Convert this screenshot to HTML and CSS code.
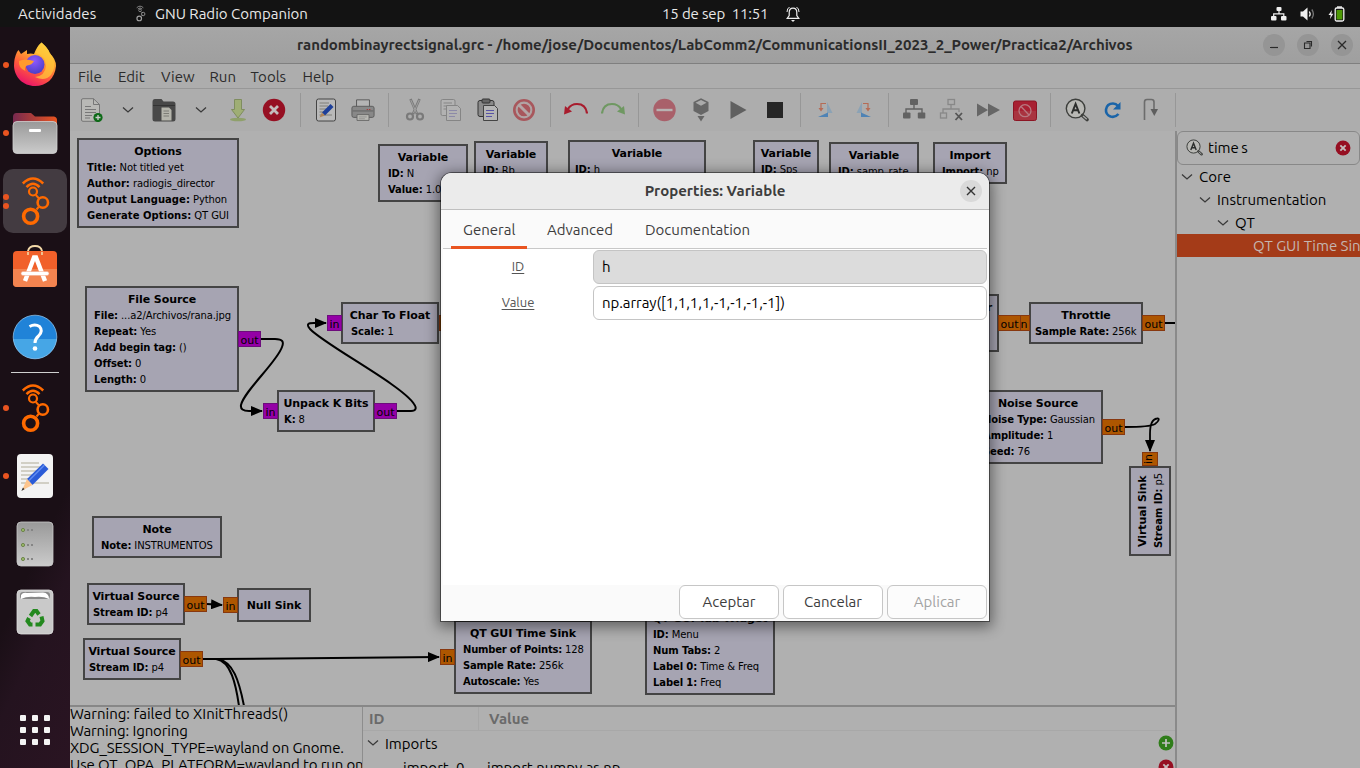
FILE: index.html
```
<!DOCTYPE html>
<html lang="es">
<head>
<meta charset="utf-8">
<title>GNU Radio Companion</title>
<link rel="stylesheet" href="styles.css">
</head>
<body>
<svg class="defs" width="0" height="0">
  <defs>
    <linearGradient id="gFox" x1="0.8" y1="0" x2="0.3" y2="1"><stop offset="0" stop-color="#fff44f"/><stop offset=".35" stop-color="#ffa930"/><stop offset=".65" stop-color="#ff5a3c"/><stop offset="1" stop-color="#e8106c"/></linearGradient>
    <radialGradient id="gGlobe" cx=".45" cy=".3" r=".7"><stop offset="0" stop-color="#9059ff"/><stop offset="1" stop-color="#4b3fc6"/></radialGradient>
    <linearGradient id="gFolder" x1="0" y1="0" x2="1" y2="0"><stop offset="0" stop-color="#77294f"/><stop offset="1" stop-color="#e95420"/></linearGradient>
    <linearGradient id="gGrey" x1="0" y1="0" x2="0" y2="1"><stop offset="0" stop-color="#999"/><stop offset="1" stop-color="#cbcbcb"/></linearGradient>
    <symbol id="gnuradio" viewBox="0 0 64 64">
      <g fill="none" stroke="currentColor">
        <path d="M19.800 14.500Q30 4.500 40.200 14.500" stroke-width="2.500"/>
        <path d="M23.500 18.200Q30 11.500 36.500 18.200" stroke-width="2.500"/>
        <circle cx="30" cy="22.500" r="4" stroke-width="2.200"/>
        <path d="M32.800 26L36.500 30M36.500 37L33.500 40.500" stroke-width="2"/>
        <circle cx="39.800" cy="33.500" r="5.200" stroke-width="2.600"/>
        <circle cx="27.600" cy="47.200" r="7" stroke-width="3.600"/>
      </g>
    </symbol>
    <symbol id="chev" viewBox="0 0 12 8"><path d="M1 1.500L6 6L11 1.500" fill="none" stroke="#3a3a3a" stroke-width="1.300"/></symbol>
    <symbol id="find" viewBox="0 0 24 24">
      <circle cx="10.600" cy="10.600" r="9.300" fill="#b8b8b4" stroke="#3d3f3c" stroke-width="1.400"/>
      <path d="M17.500 17.500L22 21.500" stroke="#3d3f3c" stroke-width="3.600" stroke-linecap="round"/><path d="M18 18L21.800 21.300" stroke="#aaa" stroke-width="1.400"/>
      <path d="M6.800 15.500L10.600 6L14.400 15.500M8.300 12.300H13" fill="none" stroke="#2c2e2c" stroke-width="2"/>
    </symbol>
    <symbol id="redx" viewBox="0 0 24 24"><circle cx="12" cy="12" r="11.200" fill="#960f22"/><path d="M8 8L16 16M16 8L8 16" stroke="#c3bcbc" stroke-width="2.800"/></symbol>
    <marker id="arr" viewBox="0 0 12 10" refX="11" refY="5" markerWidth="12" markerHeight="10" markerUnits="userSpaceOnUse" orient="auto"><path d="M0 0L12 5L0 10Z"/></marker>
  </defs>
</svg>
<div class="desktop">
  <header class="topbar">
    <span class="activities">Actividades</span>
    <svg class="app-glyph" viewBox="15 6 36 52"><use href="#gnuradio" width="64" height="64"/></svg>
    <span class="app-name">GNU Radio Companion</span>
    <span class="clock">15 de sep&nbsp; 11:51</span>
    <svg class="bell" viewBox="0 0 14 16"><g fill="none" stroke="#eee" stroke-width="1.200"><path d="M1.200 12.300H12.800L10.800 9.500V6.500Q10.800 2.200 7 2.200Q3.200 2.200 3.200 6.500V9.500Z"/><path d="M1 6Q1 2.500 3.500 1M13 6Q13 2.500 10.500 1" stroke-width="1"/></g><path d="M5 14H9L7 16Z" fill="#eee"/></svg>
    <div class="tray">
      <svg width="16" height="14" viewBox="0 0 16 14"><g fill="#f0f0f0"><rect x="5.500" y="0" width="5" height="4" rx="1"/><rect x="0" y="9" width="5.500" height="4.500" rx="1"/><rect x="10" y="9" width="5.500" height="4.500" rx="1"/></g><path d="M8 4V7M2.700 9.500V6.800H12.800V9.500" fill="none" stroke="#f0f0f0" stroke-width="1.200"/></svg>
      <svg width="16" height="14" viewBox="0 0 16 14"><path d="M0.500 4.500H3L7.500 0.500V13.500L3 9.500H.5Z" fill="#f0f0f0"/><path d="M9.300 4.500Q11 7 9.300 9.500" fill="none" stroke="#f0f0f0" stroke-width="1.300"/><path d="M11.800 2.500Q15 7 11.800 11.500" fill="none" stroke="#777" stroke-width="1.300"/></svg>
      <svg width="17" height="16" viewBox="0 0 17 16"><path d="M4 4L0.500 9H2.700L2 13L5.300 7.700H3.300Z" fill="#f0f0f0"/><rect x="7.200" y="2" width="8.600" height="13" rx="1.500" fill="none" stroke="#f0f0f0" stroke-width="1.300"/><rect x="9" y="0.300" width="5" height="1.500" fill="#f0f0f0"/><rect x="8.600" y="4" width="5.800" height="9.500" fill="#4e9a06"/></svg>
    </div>
  </header>
  <div class="body">
    <nav class="dock">
      <div class="app"><i class="dot"></i><svg viewBox="0 0 64 64">
        <path d="M38.500 9.500Q46 16 46.500 20Q53 26 53 33C52 46 43 53 32 53C20 53 11.500 44 11 33Q11 25 14 19L15.500 17L18 21L24 17L24 21Q28 20 31 21Q34 13 38.500 9.500Z" fill="url(#gFox)"/>
        <circle cx="32" cy="31.500" r="9.500" fill="url(#gGlobe)"/>
        <path d="M16 28Q22 25 31 28Q29 32 24 32.500Q21 34 22.500 38Q15 35 16 28Z" fill="#ff9a2e"/>
        <path d="M38.500 9.500Q34 14 33 20Q43 23 43 33Q42 43 32 44Q42 49 48 42Q53 35 50 26Q46 16 38.500 9.500Z" fill="#ffc63a" opacity=".75"/></svg></div>
      <div class="app"><i class="dot"></i><svg viewBox="0 0 64 64">
        <path d="M10 25V16Q10 12 13.500 12H28L32 15.500H51Q54 16 54 19V28H10Z" fill="url(#gFolder)"/>
        <rect x="10" y="20.500" width="44" height="32" rx="4" fill="url(#gGrey)" stroke="#d0d0d0" stroke-width=".8"/><rect x="26" y="28" width="12" height="3" rx="1" fill="#fff"/></svg></div>
      <div class="app active"><i class="dot d1"></i><i class="dot d2"></i><svg class="gr" viewBox="0 0 64 64"><use href="#gnuradio" width="64" height="64"/></svg></div>
      <div class="app"><svg viewBox="0 0 64 64">
        <path d="M25 20V14Q26 9 32 9Q38 9 39 14V20" fill="none" stroke="#f3d9a8" stroke-width="1.800"/>
        <rect x="10" y="14" width="44" height="36" rx="4" fill="#f1602a"/><path d="M10 32H54V46Q54 50 50 50H14Q10 50 10 46Z" fill="#f38450"/>
        <path d="M25 18V15M39 18V15" stroke="#f3d9a8" stroke-width="1.600"/>
        <path d="M22 44L31 20.500H33L42 44" fill="none" stroke="#fff" stroke-width="4.400"/><rect x="18" y="34.500" width="28" height="4" rx="2" fill="#fff" stroke="#f0a080" stroke-width=".5"/></svg></div>
      <div class="app"><svg viewBox="0 0 64 64">
        <circle cx="32" cy="32" r="21.800" fill="#2083d8"/><path d="M10.300 34H53.700A21.800 21.800 0 0 1 10.300 34Z" fill="#46a6e6"/><circle cx="32" cy="32" r="21.800" fill="none" stroke="#9bcdf2" stroke-width=".7"/>
        <path d="M26.500 21.500Q32 18.500 36.500 21.500Q40.500 26 35.500 31Q32 34 32 38" fill="none" stroke="#fff" stroke-width="3"/><circle cx="32" cy="43.500" r="2.300" fill="#fff"/></svg></div>
      <hr class="dock-sep">
      <div class="app"><i class="dot"></i><svg class="gr" viewBox="0 0 64 64"><use href="#gnuradio" width="64" height="64"/></svg></div>
      <div class="app"><i class="dot"></i><svg viewBox="0 0 64 64">
        <rect x="14" y="10" width="36" height="44" rx="4" fill="#f3f3f3"/><path d="M18 19H36M18 23H41M18 27H38M18 31H34M18 35H30M18 39H46" stroke="#c6c3b6" stroke-width="1.700"/>
        <path d="M24 35L40 19.500L45.500 25L29.500 41Z" fill="#2a5bd7"/><path d="M26 36.500L41.500 21" stroke="#5f8bf0" stroke-width="1.600"/><path d="M24 35L29.500 41L19 46.500Z" fill="#fdc58e"/><path d="M20 43.500L21.500 45.300L18.300 47Z" fill="#333"/></svg></div>
      <div class="app"><svg viewBox="0 0 64 64">
        <rect x="14" y="10" width="36" height="44" rx="4" fill="url(#gGrey)" stroke="#c9c9c9" stroke-width=".8"/>
        <g fill="#9ab86a" stroke="#5f7a3a" stroke-width=".8"><circle cx="20" cy="18" r="1.600"/><circle cx="20" cy="33" r="1.600"/><circle cx="20" cy="47" r="1.600"/></g>
        <path d="M24 18H30M24 33H30M24 47H30" stroke="#858585" stroke-width="2" stroke-dasharray="2 2"/></svg></div>
      <div class="app"><svg viewBox="0 0 64 64">
        <rect x="14" y="10" width="36" height="44" rx="4" fill="#c9c9c9" stroke="#dedede" stroke-width=".8"/><rect x="17" y="12" width="30" height="7" rx="3" fill="#888"/><path d="M18 19V15Q20 12 24 13L40 12.500Q46 13 46 19Q40 16 32 17Q24 16 18 19Z" fill="#fff"/>
        <g fill="none" stroke="#23891f" stroke-width="4"><path d="M27.500 36L31 31H33.500L36 34.500"/><path d="M38.500 36.500L39.500 41L37 44.500H32.500"/><path d="M29.500 44.500H27L24.500 41L26 38"/></g></svg></div>
      <div class="app grid"><svg viewBox="0 0 64 64"><g fill="#f4f4f4"><rect x="17" y="17" width="6" height="6" rx="1"/><rect x="29" y="17" width="6" height="6" rx="1"/><rect x="41" y="17" width="6" height="6" rx="1"/><rect x="17" y="29" width="6" height="6" rx="1"/><rect x="29" y="29" width="6" height="6" rx="1"/><rect x="41" y="29" width="6" height="6" rx="1"/><rect x="17" y="41" width="6" height="6" rx="1"/><rect x="29" y="41" width="6" height="6" rx="1"/><rect x="41" y="41" width="6" height="6" rx="1"/></g></svg></div>
    </nav>

    <main class="window">
      <div class="titlebar">
        <span class="win-title">randombinayrectsignal.grc - /home/jose/Documentos/LabComm2/CommunicationsII_2023_2_Power/Practica2/Archivos</span>
        <div class="win-buttons">
          <b><svg viewBox="0 0 22 22"><path d="M7 13.500H15" stroke="#2a2a2a" stroke-width="1.200"/></svg></b>
          <b><svg viewBox="0 0 22 22"><path d="M7.500 9H13V14.500H7.500ZM9.500 7.500H14.500V12.500" fill="none" stroke="#2a2a2a" stroke-width="1.100"/></svg></b>
          <b><svg viewBox="0 0 22 22"><path d="M7 7L15 15M15 7L7 15" stroke="#2a2a2a" stroke-width="1.300"/></svg></b>
        </div>
      </div>
      <div class="menubar"><span class="m1">File</span><span class="m2">Edit</span><span class="m3">View</span><span class="m4">Run</span><span class="m5">Tools</span><span class="m6">Help</span></div>
      <div class="toolbar">
        <i><svg viewBox="0 0 24 24"><path d="M2.500 2Q2.500 .7 4 .7H14.500L20.500 6.500V22Q20.500 23.300 19 23.300H4Q2.500 23.300 2.500 22Z" fill="#b9b9b6" stroke="#777" /><path d="M14.500 .7V6.500H20.500" fill="none" stroke="#777"/><path d="M6 8.500H12M6 11.500H17M6 14.500H17M6 17.500H13M6 20H11" stroke="#777"/><circle cx="19" cy="19.500" r="4.600" fill="#0d6a17"/><path d="M19 17V22M16.500 19.500H21.500" stroke="#ccc" stroke-width="1.300"/></svg></i>
        <i><svg class="chev" viewBox="0 0 12 8"><use href="#chev"/></svg></i>
        <i><svg viewBox="0 0 24 24"><path d="M.5 4Q.5 1 3 1H9.500L11.500 3.500H21Q23.500 3.500 23.500 6V21Q23.500 23.500 21 23.500H3Q.5 23.500 .5 21Z" fill="#484848"/><path d="M1 7.500H23" stroke="#333"/><path d="M9.500 9.500H17L19.500 12V22.500H9.500Z" fill="#b5b5ac"/><path d="M11.500 13H17M11.500 15.500H17M11.500 18H17" stroke="#7d7d76"/></svg></i>
        <i><svg class="chev" viewBox="0 0 12 8"><use href="#chev"/></svg></i>
        <i><svg viewBox="0 0 24 24"><ellipse cx="12" cy="21.500" rx="8" ry="1.800" fill="#8fa06b"/><path d="M8.500 1.500H15.500V11.500H18.500L12 20L5.500 11.500H8.500Z" fill="#9fae75" stroke="#7f8d5f"/></svg></i>
        <i><svg viewBox="0 0 24 24"><use href="#redx"/></svg></i>
        <u></u>
        <i><svg viewBox="0 0 24 24"><rect x="2.500" y="1" width="19" height="22" rx="2" fill="#b9b9b9" stroke="#454545"/><path d="M5.500 5H15M5.500 8H14M5.500 11H12M5.500 14H10M5.500 17H18" stroke="#7e7e79"/><path d="M8 14.500L16.500 6L19.500 9L11 17.500Z" fill="#1d3f99"/><path d="M8 14.500L11 17.500L5.500 19.500Z" fill="#b08559"/></svg></i>
        <i><svg viewBox="0 0 26 24"><path d="M6 10V1H20V10" fill="#b4b4b4" stroke="#555"/><rect x="1" y="8" width="24" height="12" rx="2" fill="#888" stroke="#5a5a5a"/><path d="M1.500 13H24.500" stroke="#6d6d6d" stroke-width="1.500"/><path d="M17 11.500H22" stroke="#a33" stroke-dasharray="1.500 1"/><path d="M6.500 17H19.500V23.300H6.500Z" fill="#b9b9b4" stroke="#666"/><path d="M8.500 19.500H17M8.500 21.500H15" stroke="#888" stroke-width=".8"/></svg></i>
        <u></u>
        <i><svg viewBox="0 0 24 24" fill="none" stroke="#7a7a7a"><path d="M7.500 1L14 16M16.500 1L10 16" stroke-width="2.600"/><path d="M7.800 2L13.500 15M16.200 2L10.500 15" stroke="#aaa" stroke-width=".8"/><circle cx="7" cy="18.500" r="3" stroke-width="2.200"/><circle cx="17" cy="18.500" r="3" stroke-width="2.200"/></svg></i>
        <i><svg viewBox="0 0 24 24" fill="#b2b2b2" stroke="#858585"><rect x="2" y="1.500" width="14" height="16" rx="1.500"/><path d="M4.500 5H13M4.500 8H13M4.500 11H9"/><path d="M7.500 7.500H18.500L21.500 10.500V22.500H7.500Z"/><path d="M10 12.500H18M10 15.500H18M10 18.500H16" stroke="#8c8aa8"/></svg></i>
        <i><svg viewBox="0 0 24 24"><rect x="2" y="2.500" width="16" height="16" rx="2" fill="#8a8a8a" stroke="#333"/><rect x="6" y="1" width="8" height="4" rx="1" fill="#666" stroke="#333"/><path d="M7.500 7.500H18.500L21.500 10.500V22.500H7.500Z" fill="#b5b5b5" stroke="#444"/><path d="M10 12.500H18M10 15.500H18M10 18.500H16" stroke="#5753a6"/></svg></i>
        <i><svg viewBox="0 0 24 24" fill="none"><circle cx="12" cy="12" r="9.700" fill="#aaa0a0" stroke="#a8575c" stroke-width="2.600"/><circle cx="12" cy="12" r="7" fill="#a8575c" stroke="#b4a6a6" stroke-width="1.300"/><path d="M7 7L17 17" stroke="#b4a6a6" stroke-width="3"/></svg></i>
        <u></u>
        <i><svg viewBox="0 0 24 24"><path d="M23 15.500Q22 6 13 6Q7 6 4 11" fill="none" stroke="#a81c2d" stroke-width="2.200"/><path d="M1 8L8 13.500L0 16.500Z" fill="#a81c2d"/></svg></i>
        <i><svg viewBox="0 0 24 24"><path d="M1 15.500Q2 6 11 6Q17 6 20 11" fill="none" stroke="#6f9862" stroke-width="2.200"/><path d="M23 8L16 13.500L24 16.500Z" fill="#6f9862"/></svg></i>
        <u></u>
        <i><svg viewBox="0 0 24 24"><circle cx="11.500" cy="12" r="11.200" fill="#a9606a"/><path d="M3.500 12H19.500" stroke="#b8b2b2" stroke-width="2.400"/></svg></i>
        <i><svg viewBox="0 0 24 24"><path d="M12 .3L19.500 4V13L12 17L4.500 13V4Z" fill="#666"/><path d="M12 2L17.500 4.800L12 7.800L6.500 4.800Z" fill="#aaa"/><path d="M8.500 18H15.500L12 23.500Z" fill="#666"/></svg></i>
        <i><svg viewBox="0 0 24 24"><path d="M4.500 3L20.500 12L4.500 21Z" fill="#606060"/></svg></i>
        <i><svg viewBox="0 0 24 24"><rect x="4" y="4" width="16" height="16" fill="#262626"/></svg></i>
        <u></u>
        <i><svg viewBox="0 0 24 24"><path d="M13 4L18.500 15H13Z" fill="#8ba2b5"/><path d="M4 19L14 14.500V19Z" fill="#4f83b5"/><path d="M12 5.500H7V11" fill="none" stroke="#b66b55" stroke-width="1.200"/><path d="M4.500 10H9.500L7 13.500Z" fill="#b66b55"/></svg></i>
        <i><svg viewBox="0 0 24 24"><path d="M11 4L5.500 15H11Z" fill="#8ba2b5"/><path d="M20 19L10 14.500V19Z" fill="#4f83b5"/><path d="M12 5.500H17V11" fill="none" stroke="#b66b55" stroke-width="1.200"/><path d="M14.500 10H19.500L17 13.500Z" fill="#b66b55"/></svg></i>
        <u></u>
        <i><svg viewBox="0 0 24 24"><g fill="#626262"><rect x="7" y="1" width="8" height="6" rx="1"/><rect x="0" y="14.500" width="7.500" height="6" rx="1"/><rect x="14.800" y="14.500" width="7.500" height="6" rx="1"/></g><path d="M11 7V11M3 15V11H19V15" fill="none" stroke="#626262" stroke-width="1.400"/></svg></i>
        <i><svg viewBox="0 0 24 24" fill="none" stroke="#888" stroke-width="1.300"><rect x="9" y="1.500" width="6.500" height="5"/><rect x="1.500" y="15" width="6" height="5"/><path d="M12 7V11M4 15V11H20V14"/><path d="M16.500 15L23 22M23 15L16.500 22" stroke="#555" stroke-width="1.800"/></svg></i>
        <i><svg viewBox="0 0 24 24"><path d="M1 5.500L12 12L1 18.500ZM12 5.500L24 12L12 18.500Z" fill="#666"/></svg></i>
        <i><svg viewBox="0 0 24 24"><rect x=".5" y="3" width="23" height="19.500" rx="2" fill="#a82032" stroke="#8c1524"/><path d="M1 13H23V20Q23 22 21 22H3Q1 22 1 20Z" fill="#a93440"/><circle cx="12" cy="12.700" r="6" fill="none" stroke="#b87880" stroke-width="1.300"/><path d="M8 8.500L16 17" stroke="#b87880" stroke-width="1.300"/></svg></i>
        <u></u>
        <i><svg viewBox="0 0 24 24"><use href="#find"/></svg></i>
        <i><svg viewBox="0 0 24 24"><path d="M17.500 16Q14 20 9.500 18.500Q4.500 16.500 5 11.500Q6 5.500 12 5.500Q15 5.500 17 8" fill="none" stroke="#1a64a8" stroke-width="2.600"/><path d="M19.500 4V11.500H12Z" fill="#1a64a8"/></svg></i>
        <i><svg viewBox="0 0 24 24"><path d="M6.500 22V4Q6.500 1.500 9 1.500H13.500Q16 1.500 16 4V12" fill="none" stroke="#6c6c6c" stroke-width="1.600"/><path d="M12.500 11H20L16.300 18Z" fill="#5e5e5e"/></svg></i>
        <u></u>
      </div>
      <div class="work">
        <div class="left">
          <section class="canvas">
            <svg class="wires" viewBox="70 131 1105 575" width="1105" height="575"><g fill="none" stroke="#000" stroke-width="2">
              <path d="M261 339H275C283 339 284 342 282 347C277 362 244 391 241 405Q240 411 249 411H262" marker-end="url(#arr)"/>
              <path d="M397 411H411C416 411 417 408 414 404C402 385 325 345 310 329C306 324 308 323 314 323H326" marker-end="url(#arr)"/>
              <path d="M1165 323H1176"/>
              <path d="M1125 427C1138 427 1150 427 1155 424C1159 421 1160 418 1157 418.500C1153 419 1150 424 1150 434V451" stroke-width="1.800" marker-end="url(#arr)"/>
              <path d="M207 604L222 605" marker-end="url(#arr)"/>
              <path d="M203 659H216L439 657" marker-end="url(#arr)"/>
              <path d="M216 659C231 661 236 685 239 706M218 659C233 662 239 680 244 706"/>
            </g></svg>
            <div class="block b-options"><h4>Options</h4><p><b>Title:</b> Not titled yet</p><p><b>Author:</b> radiogis_director</p><p><b>Output Language:</b> Python</p><p><b>Generate Options:</b> QT GUI</p></div>
            <div class="block b-file"><h4>File Source</h4><p><b>File:</b> ...a2/Archivos/rana.jpg</p><p><b>Repeat:</b> Yes</p><p><b>Add begin tag:</b> ()</p><p><b>Offset:</b> 0</p><p><b>Length:</b> 0</p></div>
            <div class="block b-unpack"><h4>Unpack K Bits</h4><p><b>K:</b> 8</p></div>
            <div class="block b-char"><h4>Char To Float</h4><p><b>Scale:</b> 1</p></div>
            <div class="block b-n"><h4>Variable</h4><p><b>ID:</b> N</p><p><b>Value:</b> 1.024k</p></div>
            <div class="block b-rb"><h4>Variable</h4><p><b>ID:</b> Rb</p></div>
            <div class="block b-h"><h4>Variable</h4><p><b>ID:</b> h</p></div>
            <div class="block b-sps"><h4>Variable</h4><p><b>ID:</b> Sps</p></div>
            <div class="block b-samp"><h4>Variable</h4><p><b>ID:</b> samp_rate</p></div>
            <div class="block b-import"><h4>Import</h4><p><b>Import:</b> np</p></div>
            <div class="block b-filter"><h4>Interpolating FIR Filter</h4></div>
            <div class="block b-throttle"><h4>Throttle</h4><p><b>Sample Rate:</b> 256k</p></div>
            <div class="block b-noise"><h4>Noise Source</h4><p><b>Noise Type:</b> Gaussian</p><p><b>Amplitude:</b> 1</p><p><b>Seed:</b> 76</p></div>
            <div class="block b-vsink"><h4>Virtual Sink</h4><p><b>Stream ID:</b> p5</p></div>
            <div class="block b-note"><h4>Note</h4><p><b>Note:</b> INSTRUMENTOS</p></div>
            <div class="block b-vs1"><h4>Virtual Source</h4><p><b>Stream ID:</b> p4</p></div>
            <div class="block b-null"><h4>Null Sink</h4></div>
            <div class="block b-vs2"><h4>Virtual Source</h4><p><b>Stream ID:</b> p4</p></div>
            <div class="block b-time"><h4>QT GUI Time Sink</h4><p><b>Number of Points:</b> 128</p><p><b>Sample Rate:</b> 256k</p><p><b>Autoscale:</b> Yes</p></div>
            <div class="block b-tab"><h4>QT GUI Tab Widget</h4><p><b>ID:</b> Menu</p><p><b>Num Tabs:</b> 2</p><p><b>Label 0:</b> Time &amp; Freq</p><p><b>Label 1:</b> Freq</p></div>
            <span class="port byte p-file">out</span><span class="port byte in p-unpin">in</span><span class="port byte p-unpout">out</span><span class="port byte in p-charin">in</span>
            <span class="port p-charout"></span><span class="port in p-thrin">in</span><span class="port p-firout">out</span><span class="port p-throut">out</span><span class="port p-noise">out</span><span class="port in p-vsink">in</span>
            <span class="port p-vs1">out</span><span class="port in p-null">in</span><span class="port p-vs2">out</span><span class="port in p-time">in</span>
          </section>
          <section class="bottom">
            <div class="console"><p>Warning: failed to XInitThreads()</p><p>Warning: Ignoring</p><p>XDG_SESSION_TYPE=wayland on Gnome.</p><p>Use QT_QPA_PLATFORM=wayland to run on</p></div>
            <div class="vars">
              <div class="vars-head"><span class="col-id">ID</span><span class="col-val">Value</span></div>
              <div class="vars-row"><svg class="chev" viewBox="0 0 12 8"><use href="#chev"/></svg><span class="grow imports">Imports</span><svg class="act" viewBox="0 0 24 24"><circle cx="12" cy="12" r="11.200" fill="#2f7d1a"/><path d="M12 6V18M6 12H18" stroke="#c0c0c0" stroke-width="2.600"/></svg></div>
              <div class="vars-row"><span class="name">import_0</span><span class="grow val">import numpy as np</span><svg class="act" viewBox="0 0 24 24"><use href="#redx"/></svg></div>
            </div>
          </section>
        </div>
        <aside class="side">
          <div class="search"><svg class="s-find" viewBox="0 0 24 24"><use href="#find"/></svg><span class="grow query">time s</span><svg class="act" viewBox="0 0 24 24"><use href="#redx"/></svg></div>
          <div class="tree">
            <div class="row l0"><svg class="chev" viewBox="0 0 12 8"><use href="#chev"/></svg><span>Core</span></div>
            <div class="row l1"><svg class="chev" viewBox="0 0 12 8"><use href="#chev"/></svg><span>Instrumentation</span></div>
            <div class="row l2"><svg class="chev" viewBox="0 0 12 8"><use href="#chev"/></svg><span>QT</span></div>
            <div class="row l3 sel"><span>QT GUI Time Sink</span></div>
          </div>
        </aside>
      </div>
    </main>
  </div>

  <div class="dialog">
    <div class="dlg-head"><span>Properties: Variable</span><b class="close"><svg viewBox="0 0 22 22"><path d="M7 7L15 15M15 7L7 15" stroke="#333" stroke-width="1.400"/></svg></b></div>
    <div class="tabs"><span class="tab on">General</span><span class="tab t2">Advanced</span><span class="tab t3">Documentation</span></div>
    <div class="form">
      <div class="field"><label>ID</label><div class="entry off">h</div></div>
      <div class="field"><label>Value</label><div class="entry"><span>np.array([1,1,1,1,-1,-1,-1,-1])</span></div></div>
    </div>
    <div class="buttons"><span class="btn">Aceptar</span><span class="btn">Cancelar</span><span class="btn dis">Aplicar</span></div>
  </div>
</div>
</body>
</html>
```
FILE: styles.css
```
* { box-sizing: border-box; }
html, body { margin: 0; width: 1360px; height: 768px; overflow: hidden; }
body { font: 15px/17px Ubuntu, "Noto Sans", sans-serif; color: #111; }
svg { display: block; flex: none; }
p, h4 { margin: 0; }
.defs { position: absolute; }
.grow { flex: 1; }
.desktop { position: relative; width: 1360px; height: 768px; display: flex; flex-direction: column; overflow: hidden; }

/* Top panel */
.topbar { height: 27px; flex: none; background: #131313; color: #e8e8e8; display: flex; align-items: center; white-space: nowrap; }
.activities { width: 117px; padding-left: 18px; letter-spacing: .1px; }
.app-glyph { width: 12px; height: 17px; margin-left: 18px; color: #a0a0a0; }
.app-name { margin-left: 8px; width: 507px; }
.clock { width: 124px; letter-spacing: -.15px; }
.bell { width: 14px; height: 16px; }
.tray { margin-left: auto; margin-right: 15px; display: flex; align-items: center; gap: 12.500px; }

/* Dock */
.body { flex: 1; display: flex; min-height: 0; }
.dock { width: 70px; flex: none; background: linear-gradient(115deg, #1a0f16 0 68%, #24131f 78%, #2a1422); padding: 6px 3px; display: flex; flex-direction: column; gap: 4px; }
.app { position: relative; width: 64px; height: 64px; flex: none; border-radius: 10px; }
.app svg { width: 64px; height: 64px; }
.app.active { background: #433b41; }
.app .gr { color: #ff6a00; }
.dot { position: absolute; left: 0; top: 29px; width: 6px; height: 6px; border-radius: 50%; background: #e95420; }
.d1 { top: 25px; }
.d2 { top: 34px; }
.dock-sep { width: 48px; height: 1px; border: 0; background: #cfcfcf; margin: -1px auto; flex: none; }
.grid { margin-top: auto; }

/* Main window */
.window { flex: 1; min-width: 0; display: flex; flex-direction: column; background: #adadad; }
.titlebar { height: 37px; flex: none; background: linear-gradient(#a6a6a6, #9f9f9f); border-bottom: 1px solid #7f7f7f; display: flex; align-items: center; justify-content: flex-end; padding-right: 7px; color: #2b2b2b; font-weight: bold; }
.win-title { width: 966px; white-space: nowrap; letter-spacing: -.03px; padding-bottom: 1px; }
.win-buttons { display: flex; gap: 12px; }
.win-buttons b { width: 22px; height: 22px; border-radius: 50%; background: #959595; }
.menubar { height: 25px; flex: none; border-bottom: 1px solid #979797; display: flex; align-items: center; color: #2b2b2b; padding: 1px 0 0 8px; }
.m1 { width: 40px; } .m2 { width: 43px; } .m3 { width: 48.500px; } .m4 { width: 41px; } .m5 { width: 52px; }
.toolbar { height: 42px; flex: none; display: flex; align-items: center; padding-left: 3px; }
.toolbar i { width: 36.600px; flex: none; display: flex; justify-content: center; }
.toolbar i svg { width: 24px; height: 24px; }
.toolbar u { width: 1px; height: 34px; background: #979797; margin: 0 7.150px; flex: none; }
.toolbar i .chev, .chev { width: 12px; height: 8px; }
.work { flex: 1; display: flex; min-height: 0; }
.left { width: 1107px; flex: none; display: flex; flex-direction: column; border-right: 2px solid #8a8a8a; }

/* Flow graph */
.canvas { position: relative; height: 576px; flex: none; background: #b0b0b0; border-bottom: 2px solid #878787; overflow: hidden; font-family: "DejaVu Sans", sans-serif; color: #000; }
.wires { position: absolute; left: 0; top: 0; }
.block { --pad: 8px; position: absolute; background: #a6a4b2; border: 2px solid #444; padding: 4px 0 2px var(--pad); white-space: nowrap; font-size: 10px; line-height: 16px; overflow: hidden; }
.block h4 { font-size: 11px; font-weight: bold; line-height: 16px; text-align: center; margin-left: calc(0px - var(--pad)); letter-spacing: -.08px; }
.block p { letter-spacing: -.12px; }
.block p b { letter-spacing: -.1px; }
.b-options p b { letter-spacing: .05px; }
.b-options { left: 7px; top: 7px; width: 162px; height: 90px; }
.b-file { --pad: 7px; left: 15px; top: 155px; width: 154px; height: 106px; }
.b-unpack { --pad: 5px; left: 207px; top: 259px; width: 98px; height: 42px; }
.b-char { left: 271px; top: 171px; width: 98px; height: 42px; }
.b-n { left: 308px; top: 13px; width: 90px; height: 58px; }
.b-rb { --pad: 7px; left: 404px; top: 10px; width: 74px; height: 58px; }
.b-h { --pad: 5px; left: 498px; top: 9px; width: 138px; height: 58px; }
.b-sps { --pad: 6px; left: 683px; top: 9px; width: 66px; height: 58px; }
.b-samp { --pad: 7px; left: 759px; top: 11px; width: 90px; height: 58px; }
.b-import { --pad: 7px; left: 863px; top: 11px; width: 74px; height: 42px; }
.b-filter { left: 775px; top: 163px; width: 154px; height: 58px; }
.b-throttle { --pad: 4px; left: 959px; top: 171px; width: 114px; height: 42px; }
.b-noise { --pad: 8px; left: 903px; top: 259px; width: 130px; height: 74px; }
.b-vsink { left: 1059px; top: 335px; width: 42px; height: 90px; writing-mode: vertical-rl; transform: rotate(180deg); padding: 6px 4px 6px 2px; }
.b-vsink h4 { margin: -6px 0; order: 1; }
.b-note { --pad: 7px; left: 22px; top: 385px; width: 130px; height: 42px; }
.b-vs1 { --pad: 4px; left: 17px; top: 452px; width: 98px; height: 42px; }
.b-null { left: 167px; top: 457px; width: 74px; height: 34px; padding-top: 8px; }
.b-vs2 { --pad: 4px; left: 13px; top: 507px; width: 98px; height: 42px; }
.b-time { --pad: 7px; left: 384px; top: 489px; width: 138px; height: 74px; }
.b-time p b { letter-spacing: -.2px; }
.b-tab { --pad: 6px; left: 575px; top: 474px; width: 130px; height: 90px; }
.port { position: absolute; width: 23px; height: 16px; border: 1px solid #87380f; background: #ad5600; font-size: 11px; line-height: 17px; text-align: center; }
.port.in { width: 15px; }
.port.byte { background: #9400a6; border-color: #6d0c7c; }
.p-file { left: 168px; top: 200px; }
.p-unpin { left: 193px; top: 272px; }
.p-unpout { left: 304px; top: 272px; }
.p-charin { left: 257px; top: 184px; }
.p-charout { left: 369px; top: 184px; }
.p-thrin { left: 945px; top: 184px; }
.p-firout { left: 928px; top: 184px; }
.p-throut { left: 1072px; top: 184px; }
.p-noise { left: 1032px; top: 288px; }
.port.p-vsink { left: 1072px; top: 321px; width: 16px; height: 14px; writing-mode: vertical-rl; transform: rotate(180deg); line-height: 12px; }
.p-vs1 { left: 114px; top: 465px; }
.p-null { left: 153px; top: 466px; }
.p-vs2 { left: 110px; top: 520px; }
.p-time { left: 370px; top: 518px; }

/* Console and variables */
.bottom { flex: 1; display: flex; min-height: 0; background: #b0b0b0; overflow: hidden; }
.console { width: 293px; flex: none; border-right: 1px solid #8d8d8d; white-space: nowrap; overflow: hidden; margin-top: -2px; color: #000; letter-spacing: -.12px; }
.console p:first-child { letter-spacing: 0; }
.vars { flex: 1; }
.vars-head { height: 24px; display: flex; align-items: center; border-bottom: 1px solid #a8a8a8; color: #6a6a6a; font-weight: bold; }
.col-id { width: 116px; padding-left: 6px; line-height: 24px; border-right: 1px solid #a8a8a8; }
.col-val { padding-left: 10px; }
.vars-row { height: 24px; display: flex; align-items: center; padding: 0 1px 0 4px; color: #000; }
.imports { margin-left: 6px; }
.name { width: 84px; padding-left: 36px; margin-right: 36px; white-space: nowrap; }
.act { width: 16px; height: 16px; }

/* Block library */
.side { flex: 1; min-width: 0; background: #b0b0b0; overflow: hidden; color: #000; }
.search { height: 34px; border: 1px solid #888; border-radius: 6px; display: flex; align-items: center; padding: 0 8px 1px; gap: 5px; }
.query { word-spacing: -1px; }
.s-find { width: 17px; height: 17px; }
.tree { padding-top: 0; }
.row { height: 23px; display: flex; align-items: center; gap: 6px; white-space: nowrap; }
.l0 { padding-left: 4px; }
.l1 { padding-left: 22px; }
.l2 { padding-left: 40px; }
.l3 { padding-left: 76px; }
.sel { background: #a43b18; color: #c5b6b0; }

/* Properties dialog */
.dialog { position: absolute; left: 441px; top: 173px; width: 548px; height: 448px; background: #fafafa; border-radius: 11px 11px 0 0; box-shadow: 0 0 0 1px rgba(0,0,0,.45), 0 3px 14px 3px rgba(0,0,0,.45); display: flex; flex-direction: column; overflow: hidden; color: #3d3d3d; }
.dlg-head { height: 37px; flex: none; background: #ebebeb; border-bottom: 1px solid #bfbfbf; display: grid; grid-template-columns: 1fr auto 1fr; align-items: center; font-weight: bold; }
.dlg-head span { grid-column: 2; padding-bottom: 2px; }
.close { justify-self: end; width: 22px; height: 22px; margin-right: 7px; border-radius: 50%; background: #d9d9d9; }
.tabs { height: 39px; flex: none; margin: 0 2px; padding-left: 8px; border-bottom: 1px solid #c8c8c8; display: flex; }
.tab { height: 39px; padding: 0 12px; line-height: 40px; }
.tab.on { width: 76px; border-bottom: 3px solid #e95420; }
.t2 { width: 98px; margin-left: 8px; }
.form { flex: 1; margin: 0 2px; background: #fff; padding-top: 1px; display: flex; flex-direction: column; gap: 2px; }
.field { height: 34px; display: flex; }
.field label { width: 150px; text-align: center; line-height: 32px; font-size: 13px; text-decoration: underline; text-decoration-thickness: 1px; text-underline-offset: 2px; color: #555; }
.entry { flex: 1; border: 1px solid #c4c4c4; border-radius: 6px; padding-left: 8px; line-height: 32px; color: #000; background: #fff; letter-spacing: -.06px; }
.entry.off { background: #dcdcdc; }
.buttons { height: 36px; flex: none; display: flex; justify-content: flex-end; gap: 4px; padding-right: 2px; }
.btn { width: 100px; height: 34px; border: 1px solid #c6c6c6; border-radius: 6px; background: #fff; text-align: center; line-height: 32px; }
.btn.dis { background: #fcfcfc; color: #a3a3a3; }
```
